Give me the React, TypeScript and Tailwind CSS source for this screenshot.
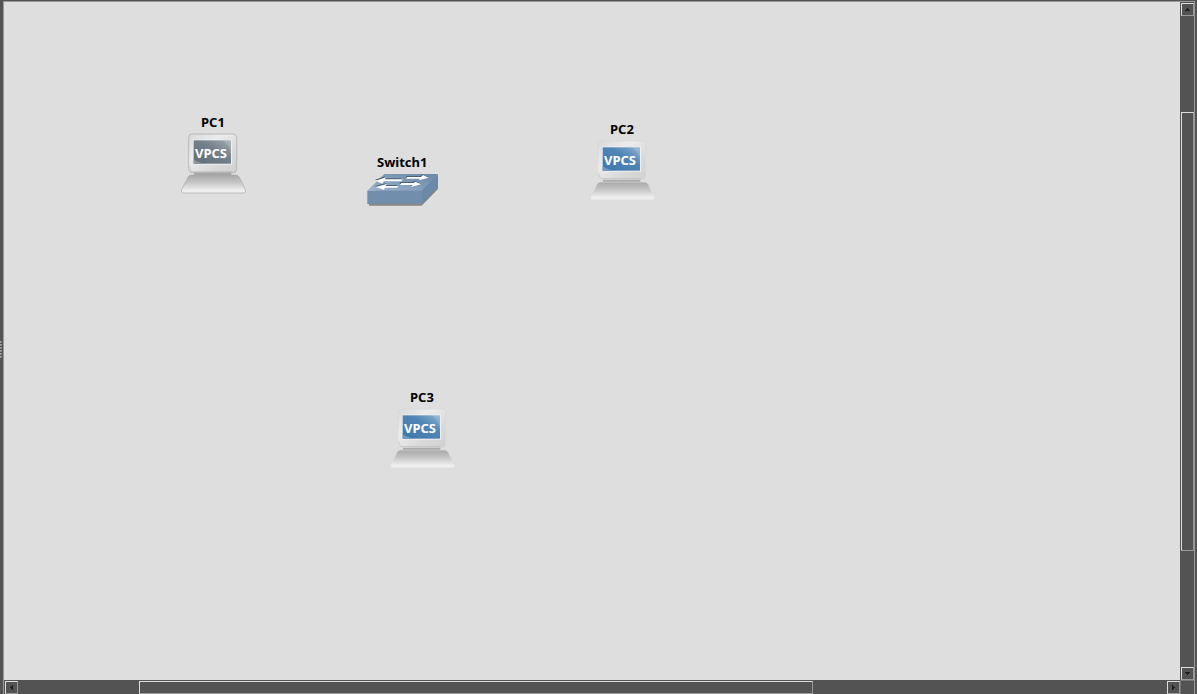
import React from 'react';

type PcProps = { name: string; place: string; active?: boolean };

function Pc({ name, place, active = false }: PcProps) {
  const id = name.toLowerCase();
  return (
    <div className={`absolute h-[90px] w-[90px] ${place}`}>
      <svg className="absolute inset-0" width="90" height="90" viewBox="0 0 270 270">
        <defs>
          <linearGradient id={`${id}-base`} x1="0" y1="0" x2="0" y2="1">
            <stop offset="0" stopColor="#a8a8a8" />
            <stop offset="0.4" stopColor="#c4c4c4" />
            <stop offset="0.85" stopColor="#efefef" />
            <stop offset="1" stopColor="#eeeeee" />
          </linearGradient>
          <linearGradient id={`${id}-case`} x1="0" y1="0" x2="1" y2="1">
            <stop offset="0" stopColor="#d8d8d8" />
            <stop offset="0.35" stopColor="#ececec" />
            <stop offset="0.7" stopColor="#d9d9d9" />
            <stop offset="1" stopColor="#d0d0d0" />
          </linearGradient>
          <linearGradient id={`${id}-screen`} x1="0" y1="1" x2="1" y2="0">
            <stop offset="0" stopColor={active ? '#3f76aa' : '#606c77'} />
            <stop offset="0.6" stopColor={active ? '#4f85b6' : '#75818b'} />
            <stop offset="1" stopColor={active ? '#8db1d2' : '#a3acb3'} />
          </linearGradient>
        </defs>
        <path d="M72 187H184V198H72Z" fill="#a6a6a6" />
        <path
          d="M64 195H197Q204 195 208 202L226 239Q229 249 221 249H40Q32 249 35 239L54 202Q57 195 64 195Z"
          fill={`url(#${id}-base)`}
          stroke={active ? '#dedede' : '#a6a6a6'}
          strokeWidth="2"
        />
        <rect x="56" y="72" width="144" height="116" rx="11" fill={`url(#${id}-case)`} stroke={active ? '#d8d8d8' : '#a6a6a6'} strokeWidth="2" />
        <path d="M60 170Q60 184 70 185H185" fill="none" stroke="#b8b8b8" strokeWidth="2" />
        <rect x="69" y="89" width="117" height="75" fill="#f0f0f0" />
        <rect x="71" y="91" width="112" height="70" fill={`url(#${id}-screen)`} />
        <path d="M71 147Q85 158 108 161H71Z" fill={active ? '#7099c3' : '#89949c'} />
        <path d="M157 91H183V133Q180 105 157 91Z" fill="#ffffff" opacity="0.14" />
      </svg>
      <span className="absolute left-[31px] top-[3px] text-[13px] leading-[18px] font-bold text-black">{name}</span>
      <span className="absolute left-[25px] top-[34px] text-[13px] leading-[18px] font-bold text-white">VPCS</span>
    </div>
  );
}

function Switch() {
  return (
    <div className="absolute left-[351px] top-[148px] h-[65px] w-[95px]">
      <svg className="absolute inset-0" width="95" height="65" viewBox="0 0 285 195">
        <defs>
          <linearGradient id="switch-top" x1="0" y1="1" x2="1" y2="0">
            <stop offset="0" stopColor="#9cb6d2" />
            <stop offset="0.5" stopColor="#809db9" />
            <stop offset="1" stopColor="#6989a9" />
          </linearGradient>
          <g id="switch-arrows">
            <path d="M157 81H198L204 75L221 83L191 91L195 86H153Z" />
            <path d="M143 88H89L93 82L62 92L82 101L86 94H139Z" />
            <path d="M139 99H176L181 95L198 103L168 111L173 105H135Z" />
            <path d="M130 108H91L96 102L62 111L87 119L90 113H126Z" />
          </g>
        </defs>
        <path d="M42 126V167H200L249 117V78Z" fill="#8c8681" />
        <path d="M37 122L88 72H249L201 122Z" fill="url(#switch-top)" />
        <path d="M201 122L249 72V112L201 162Z" fill="#6b89a8" />
        <path d="M37 122H201V162H37Z" fill="#718fad" />
        <use href="#switch-arrows" fill="#4a6075" transform="translate(-2 -3)" />
        <use href="#switch-arrows" fill="#ffffff" />
      </svg>
      <span className="absolute left-[22px] top-[3px] text-[13px] leading-[18px] font-bold text-black">Switch1</span>
    </div>
  );
}

const bevel = 'shrink-0 border border-t-[#dedede] border-l-[#dedede] border-r-[#999999] border-b-[#999999] bg-[#535353]';

function ArrowButton({ turn }: { turn: string }) {
  return (
    <div className={`flex h-[13px] w-[13px] items-center justify-center ${bevel}`}>
      <svg className={turn} width="7" height="7" viewBox="0 0 7 7" shapeRendering="crispEdges">
        <path d="M3 2H4V3H5V4H6V5H1V4H2V3H3Z" fill="#202020" />
      </svg>
    </div>
  );
}

export default function App() {
  return (
    <div className="flex h-[694px] w-[1197px] overflow-hidden bg-[#535353] font-['Noto_Sans','Open_Sans',sans-serif]">
      <div className="flex w-[3px] shrink-0 flex-col items-start justify-center gap-px pt-[4px]">
        {[0, 1, 2, 3, 4, 5].map((i) => (
          <i key={i} className="block h-[2px] w-[2px] border-l border-t border-[#999999] bg-[#707070]" />
        ))}
      </div>
      <div className="mt-px flex w-[1192px] shrink-0 flex-col border-l border-r border-t border-[#999999]">
        <div className="flex h-[678px] shrink-0">
          <main className="relative w-[1176px] shrink-0 bg-[#dedede]">
            <Pc name="PC1" place="left-[166px] top-[108px]" />
            <Pc name="PC2" place="left-[575px] top-[115px]" active />
            <Pc name="PC3" place="left-[375px] top-[383px]" active />
            <Switch />
          </main>
          <div className="flex w-[14px] flex-col items-start pt-px pl-px">
            <ArrowButton turn="" />
            <div className="h-[96px] shrink-0" />
            <div className={`h-[439px] w-[13px] ${bevel}`} />
            <div className="flex-1" />
            <ArrowButton turn="rotate-180" />
          </div>
        </div>
        <div className="flex h-[14px] shrink-0">
          <div className="flex w-[1176px] items-start pt-px pl-px">
            <ArrowButton turn="-rotate-90" />
            <div className="w-[121px] shrink-0" />
            <div className={`h-[13px] w-[674px] ${bevel}`} />
            <div className="flex-1" />
            <ArrowButton turn="rotate-90" />
          </div>
          <div className="h-full flex-1 border-l border-t border-[#777777]" />
        </div>
      </div>
    </div>
  );
}
